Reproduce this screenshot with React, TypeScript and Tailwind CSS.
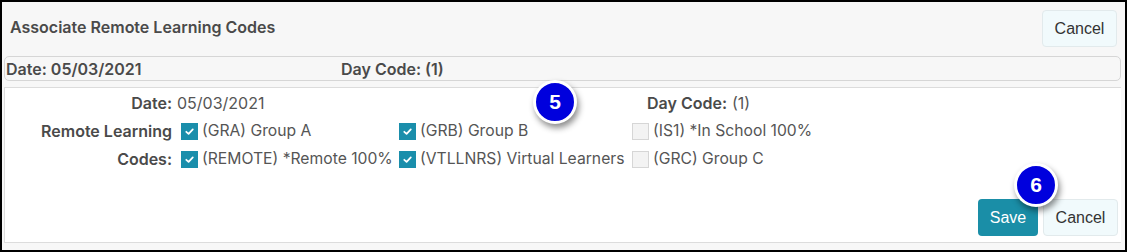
import React from "react";

const codes = [
  [
    { label: "(GRA) Group A", checked: true },
    { label: "(REMOTE) *Remote 100%", checked: true },
  ],
  [
    { label: "(GRB) Group B", checked: true },
    { label: "(VTLLNRS) Virtual Learners", checked: true },
  ],
  [
    { label: "(IS1) *In School 100%", checked: false },
    { label: "(GRC) Group C", checked: false },
  ],
];

function Check({ checked, label }: { checked: boolean; label: string }) {
  return (
    <div className="flex items-center h-[28px] gap-[4px] whitespace-nowrap">
      {checked ? (
        <span className="w-[17px] h-[17px] bg-[#1a8eab] flex items-center justify-center">
          <svg width="11" height="11" viewBox="0 0 12 12">
            <path d="M2.5 6.3 L5 8.6 L9.6 3.6" stroke="white" strokeWidth="1.9" fill="none" strokeLinecap="round" strokeLinejoin="round" />
          </svg>
        </span>
      ) : (
        <span className="w-[17px] h-[17px] bg-[#f3f3f3] border border-[#d6d6d6]" />
      )}
      <span className="text-[15.7px] text-[#555]">{label}</span>
    </div>
  );
}

function Badge({ n }: { n: number }) {
  return (
    <div className="absolute w-[44px] h-[44px] rounded-full bg-[#0000dd] border-[3px] border-white shadow-[2px_4px_6px_rgba(0,0,0,0.45)] flex items-center justify-center text-white text-[21px] font-bold font-['Liberation_Sans',Arial,sans-serif]">
      {n}
    </div>
  );
}

export default function App() {
  return (
    <div className="w-[1127px] h-[252px] border-2 border-black bg-[#f7f7f7] font-['Inter',sans-serif] text-[#4a4a4a] relative overflow-hidden">
      <div className="flex items-start justify-between pl-[8px] pr-[8px] pt-[8px] h-[54px]">
        <h1 className="text-[16px] font-semibold mt-[5px]">Associate Remote Learning Codes</h1>
        <button className="h-[37px] w-[75px] rounded-[4px] bg-[#f1fafc] border border-[#e2eaec] text-[16px] text-[#333] font-['Liberation_Sans',Arial,sans-serif]">
          Cancel
        </button>
      </div>
      <div className="mx-[2px] mr-[4px] h-[25px] rounded-[5px] border border-[#d6d6d6] flex items-center text-[16px] font-semibold">
        <span className="pl-[1px] w-[336px]">Date: 05/03/2021</span>
        <span>Day Code: (1)</span>
      </div>
      <div className="mx-[2px] mr-[4px] mt-[6px] h-[156px] bg-white border border-[#dcdcdc] border-r-0 relative">
        <div className="flex items-center h-[26px] mt-[2px] text-[16px]">
          <span className="w-[167px] text-right font-semibold">Date:</span>
          <span className="pl-[5px] w-[475px] text-[#555]">05/03/2021</span>
          <span className="font-semibold">Day Code:</span>
          <span className="pl-[5px] text-[#555]">(1)</span>
        </div>
        <div className="flex mt-[1px]">
          <div className="w-[167px] text-right text-[16px] font-semibold leading-[28px]">
            <div>Remote Learning</div>
            <div>Codes:</div>
          </div>
          <div className="flex pl-[9px]">
            <div className="w-[218px]">
              {codes[0].map((c) => <Check key={c.label} {...c} />)}
            </div>
            <div className="w-[233px]">
              {codes[1].map((c) => <Check key={c.label} {...c} />)}
            </div>
            <div>
              {codes[2].map((c) => <Check key={c.label} {...c} />)}
            </div>
          </div>
        </div>
        <div className="absolute right-[3px] bottom-[6px] flex gap-[5px] font-['Liberation_Sans',Arial,sans-serif] text-[16px]">
          <button className="h-[37px] w-[60px] rounded-[4px] bg-[#1a8ea7] text-white">Save</button>
          <button className="h-[37px] w-[75px] rounded-[4px] bg-[#f1fafc] border border-[#e2eaec] text-[#333]">Cancel</button>
        </div>
      </div>
      <div className="left-[531px] top-[78px] absolute">
        <Badge n={5} />
      </div>
      <div className="left-[1012px] top-[161px] absolute">
        <Badge n={6} />
      </div>
    </div>
  );
}
